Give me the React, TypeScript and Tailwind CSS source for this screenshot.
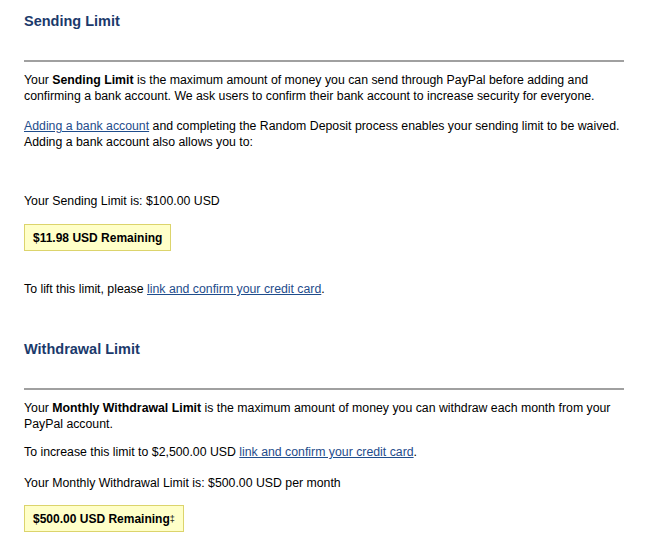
import React from "react";

function Remaining({ children }: { children: React.ReactNode }) {
  return (
    <div className="inline-flex h-[27px] items-center border border-[#dcd46c] bg-[#ffffc8] px-[8px] text-[12px] font-bold text-black">
      {children}
    </div>
  );
}

function Heading({ children }: { children: React.ReactNode }) {
  return (
    <>
      <h2 className="text-[14.5px] font-bold leading-[16px] text-[#1b3a6b]">{children}</h2>
      <div className="mt-[31px] h-[2px] w-[600px] bg-[#a0a0a0]" />
    </>
  );
}

function Link({ children }: { children: React.ReactNode }) {
  return <a className="cursor-pointer text-[#1f4d8c] underline">{children}</a>;
}

export default function App() {
  return (
    <div
      className="h-[552px] w-[669px] bg-white pl-6 pt-[13px] text-[12.3px] leading-[16px] text-black"
      style={{ fontFamily: '"Liberation Sans", Arial, sans-serif' }}
    >
      <Heading>Sending Limit</Heading>

      <p className="mt-[10px] w-[602px]">
        Your <b>Sending Limit</b> is the maximum amount of money you can send through PayPal before adding and
        confirming a bank account. We ask users to confirm their bank account to increase security for everyone.
      </p>
      <p className="mt-[14px] w-[602px]">
        <Link>Adding a bank account</Link> and completing the Random Deposit process enables your sending limit to be
        waived. Adding a bank account also allows you to:
      </p>

      <p className="mt-[43px]">Your Sending Limit is: $100.00 USD</p>
      <div className="mt-[15px]">
        <Remaining>$11.98 USD Remaining</Remaining>
      </div>

      <p className="mt-[30px]">
        To lift this limit, please <Link>link and confirm your credit card</Link>.
      </p>

      <div className="mt-[44px]">
        <Heading>Withdrawal Limit</Heading>
      </div>

      <p className="mt-[10px] w-[602px]">
        Your <b>Monthly Withdrawal Limit</b> is the maximum amount of money you can withdraw each month from your
        PayPal account.
      </p>
      <p className="mt-[12px]">
        To increase this limit to $2,500.00 USD <Link>link and confirm your credit card</Link>.
      </p>
      <p className="mt-[15px]">Your Monthly Withdrawal Limit is: $500.00 USD per month</p>
      <div className="mt-[14px]">
        <Remaining>
          $500.00 USD Remaining<span className="align-top text-[9px] font-normal">‡</span>
        </Remaining>
      </div>
    </div>
  );
}
